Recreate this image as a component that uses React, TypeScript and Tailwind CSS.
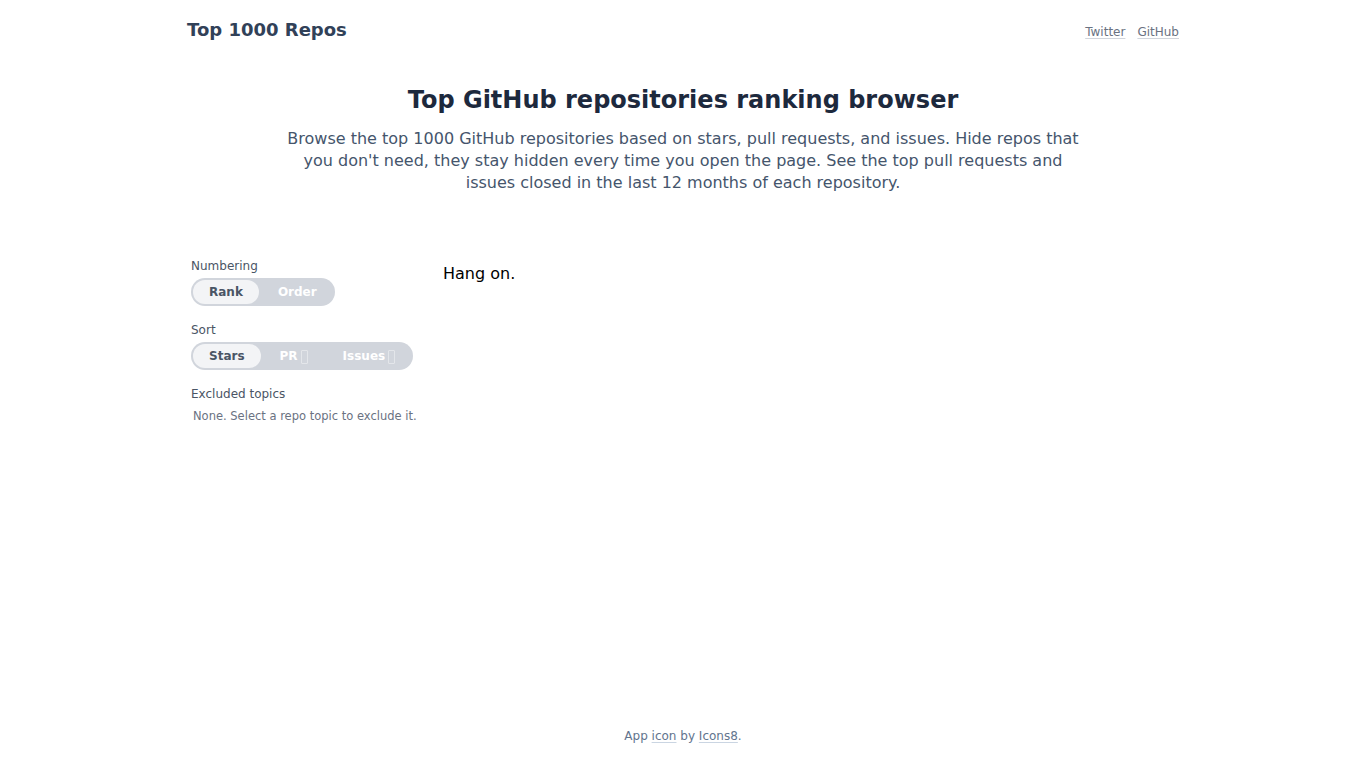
const Tofu = () => (
  <span className="inline-block w-[7px] h-[14px] ml-[3px] align-[-4px] border border-white/40 rounded-[1px]"></span>
);

type Option = { label: string; tofu?: boolean };

const Toggle = ({ options, active }: { options: Option[]; active: number }) => {
  return (
    <div className="inline-flex items-center gap-[3px] rounded-full bg-gray-300 p-[2px]">
      {options.map((o, i) => (
        <button
          key={o.label}
          className={
            i === active
              ? "h-6 px-4 rounded-full bg-gray-100 text-xs font-bold text-gray-600"
              : "h-6 px-4 rounded-full text-xs font-bold text-white"
          }
        >
          {o.label}
          {o.tofu && <Tofu />}
        </button>
      ))}
    </div>
  );
};

const App = () => {
  return (
    <div className="min-h-screen flex flex-col bg-white font-['DejaVu_Sans',sans-serif]">
      <div className="w-full max-w-5xl mx-auto px-4 flex-grow">
        {/* header */}
        <header className="flex justify-between items-center pt-4">
          <h1 className="text-lg font-bold text-slate-700 leading-7">Top 1000 Repos</h1>
          <nav className="flex gap-3 text-xs text-gray-500 mt-1">
            <a href="#" className="underline decoration-gray-300 underline-offset-2">
              Twitter
            </a>
            <a href="#" className="underline decoration-gray-300 underline-offset-2">
              GitHub
            </a>
          </nav>
        </header>

        {/* intro */}
        <div className="flex flex-col items-center text-center mt-10">
          <h2 className="text-2xl font-bold text-slate-800 leading-8">
            Top GitHub repositories ranking browser
          </h2>
          <p className="mt-3 max-w-[800px] text-base leading-snug text-slate-600">
            Browse the top 1000 GitHub repositories based on stars, pull requests, and issues. Hide
            repos that you don't need, they stay hidden every time you open the page. See the top pull
            requests and issues closed in the last 12 months of each repository.
          </p>
        </div>

        {/* body */}
        <div className="flex mt-16">
          <aside className="w-64 shrink-0 px-1">
            <div className="mb-4">
              <div className="text-xs text-gray-600 mb-1">Numbering</div>
              <Toggle options={[{ label: "Rank" }, { label: "Order" }]} active={0} />
            </div>
            <div className="mb-4">
              <div className="text-xs text-gray-600 mb-1">Sort</div>
              <Toggle
                options={[
                  { label: "Stars" },
                  { label: "PR", tofu: true },
                  { label: "Issues", tofu: true },
                ]}
                active={0}
              />
            </div>
            <div>
              <div className="text-xs text-gray-600">Excluded topics</div>
              <div className="text-[11.5px] text-gray-500 mt-1.5 px-0.5">
                None. Select a repo topic to exclude it.
              </div>
            </div>
          </aside>
          <main className="flex-grow pt-1">
            <p className="text-base text-black">Hang on.</p>
          </main>
        </div>
      </div>

      {/* footer */}
      <footer className="text-center text-xs text-slate-500 pb-6">
        App{" "}
        <a href="#" className="underline decoration-slate-300 underline-offset-2">
          icon
        </a>{" "}
        by{" "}
        <a href="#" className="underline decoration-slate-300 underline-offset-2">
          Icons8
        </a>
        .
      </footer>
    </div>
  );
};

export default App;
